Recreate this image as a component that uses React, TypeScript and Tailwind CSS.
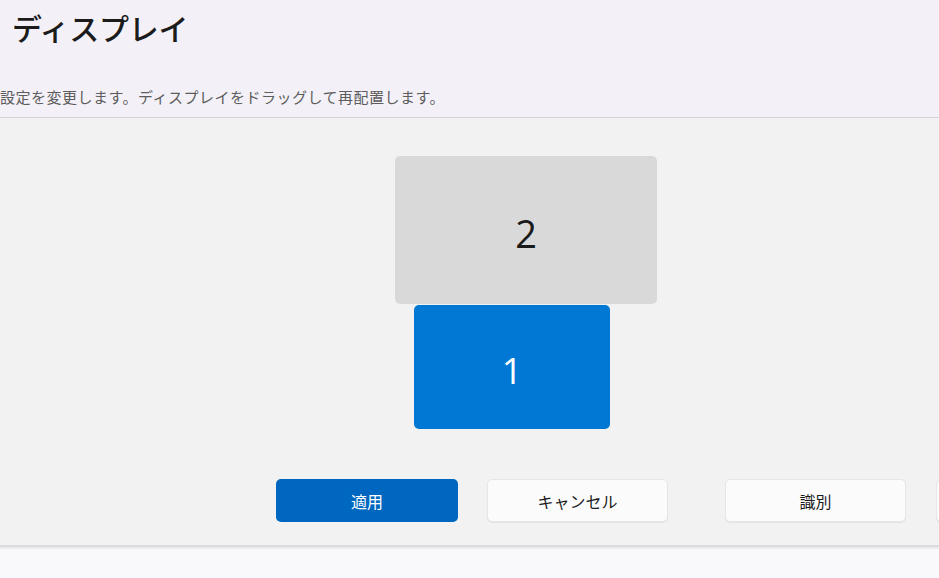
import React from "react";

const jp = { fontFamily: '"Noto Sans CJK JP", "Noto Sans", sans-serif' };
const num = { fontFamily: '"Open Sans", "Noto Sans", sans-serif' };

export default function App() {
  return (
    <div className="w-[939px] h-[578px] overflow-hidden flex flex-col bg-[#f9f9fb]" style={jp}>
      <div className="h-[117px] shrink-0 bg-[#f3f1f7] border-b border-[#d5d3da] box-content">
        <div className="pl-[12px] pt-[6px] text-[30px] leading-[42px] font-medium text-[#1b1b1b] tracking-[-0.3px]">
          ディスプレイ
        </div>
        <div className="mt-[39px] text-[15px] leading-[20px] text-[#5c5c5c] whitespace-nowrap tracking-[0.5px]">
          設定を変更します。ディスプレイをドラッグして再配置します。
        </div>
      </div>
      <div className="h-[427px] shrink-0 bg-[#f2f2f2] flex flex-col">
        <div className="relative h-[361px] shrink-0">
          <div className="absolute left-[395px] top-[38px] w-[262px] h-[148px] rounded-[5px] bg-[#d9d9d9] flex items-center justify-center pt-[6px]">
            <span className="text-[38px] font-normal text-[#1a1a1a] leading-none" style={num}>2</span>
          </div>
          <div className="absolute left-[414px] top-[187px] w-[196px] h-[124px] rounded-[5px] bg-[#0078d4] flex items-center justify-center pt-[8px]">
            <span className="text-[36px] font-normal text-white leading-none" style={num}>1</span>
          </div>
        </div>
        <div className="flex h-[43px] shrink-0 pl-[276px]">
          <button className="shrink-0 w-[182px] h-[43px] rounded-[5px] bg-[#0067c0] text-white text-[16px] flex items-center justify-center">
            適用
          </button>
          <button className="shrink-0 ml-[29px] w-[181px] h-[43px] rounded-[5px] bg-[#fbfbfb] border border-[#e6e6e6] shadow-[0_1px_1px_rgba(0,0,0,0.06)] text-[#1b1b1b] text-[16px] flex items-center justify-center">
            キャンセル
          </button>
          <button className="shrink-0 ml-[57px] w-[181px] h-[43px] rounded-[5px] bg-[#fbfbfb] border border-[#e6e6e6] shadow-[0_1px_1px_rgba(0,0,0,0.06)] text-[#1b1b1b] text-[16px] flex items-center justify-center">
            識別
          </button>
          <button className="shrink-0 ml-[30px] w-[181px] h-[43px] rounded-[5px] bg-[#fbfbfb] border border-[#e6e6e6] shadow-[0_1px_1px_rgba(0,0,0,0.06)]" />
        </div>
      </div>
      <div className="h-[2px] shrink-0 bg-[#dcdbe0]" />
      <div className="h-[2px] shrink-0 bg-[#ebeaef]" />
      <div className="flex-1 bg-[#f9f9fb]" />
    </div>
  );
}
